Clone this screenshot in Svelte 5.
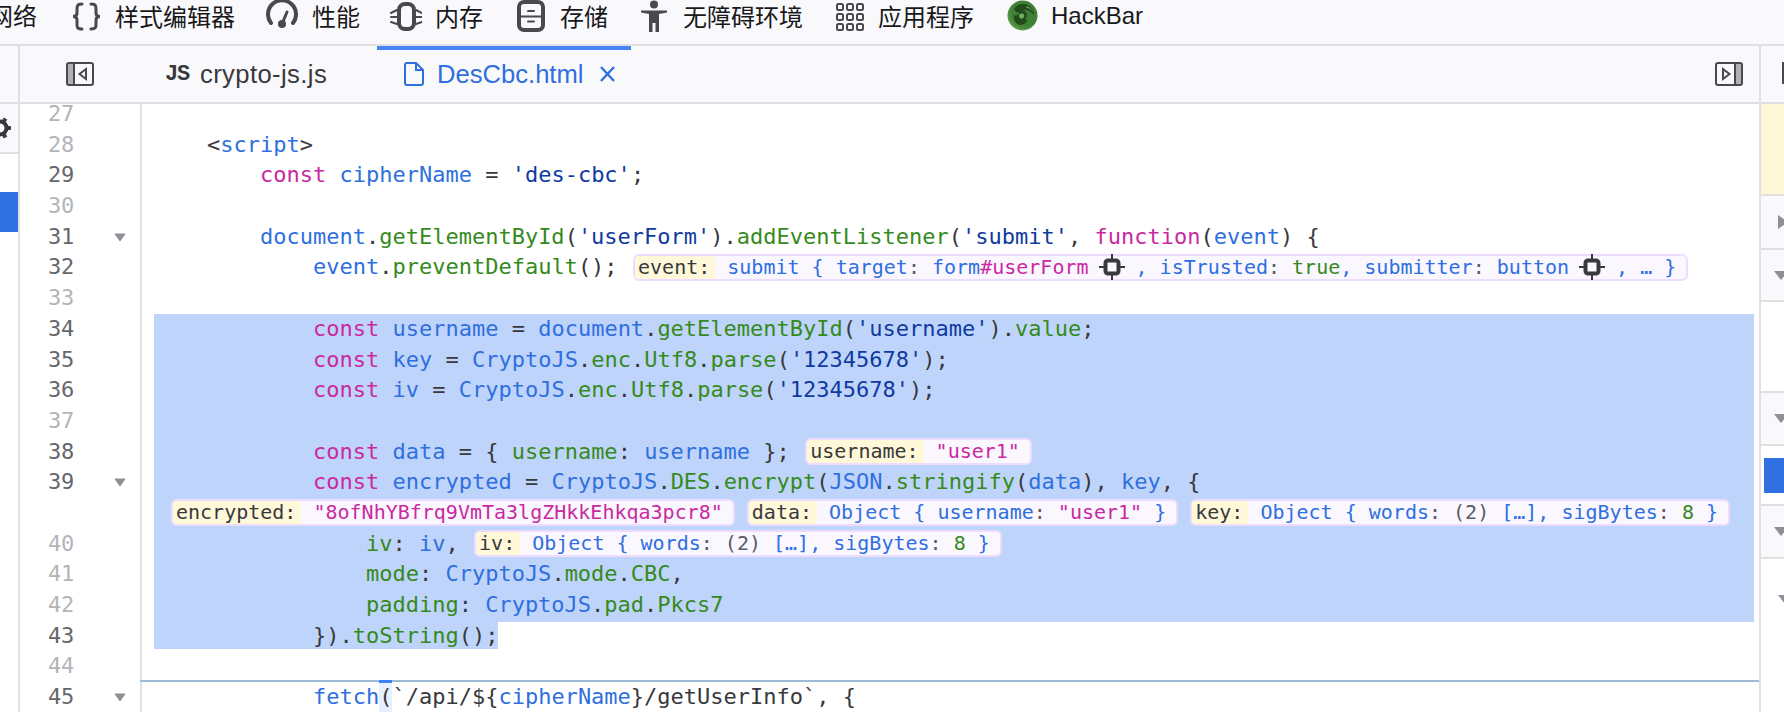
<script>
	const k = (t) => ['k', t];
	const b = (t) => ['b', t];
	const g = (t) => ['g', t];
	const s = (t) => ['s', t];
	const p = (t) => ['p', t];
	const m = (t) => ['m', t];
	const chip = ['chip', ''];

	const tabs = [
		{ id: 'style', w: 31, gap: 34, label: '样式编辑器' },
		{ id: 'perf', w: 33, gap: 31, label: '性能' },
		{ id: 'mem', w: 32, gap: 30, label: '内存' },
		{ id: 'store', w: 30, gap: 34, label: '存储' },
		{ id: 'a11y', w: 30, gap: 32, label: '无障碍环境' },
		{ id: 'apps', w: 29, gap: 33, label: '应用程序' },
		{ id: 'hack', w: 31, gap: 33, label: 'HackBar' }
	];

	const objWords = [b('Object { words'), m(': (2) '), b('[…], sigBytes'), m(': '), g('8'), b(' }')];

	const rows = [
		{ n: 27, dim: true, t: [] },
		{ n: 28, dim: true, t: [p('    <'), b('script'), p('>')] },
		{ n: 29, t: [p('        '), k('const'), p(' '), b('cipherName'), p(' = '), s("'des-cbc'"), p(';')] },
		{ n: 30, dim: true, t: [] },
		{
			n: 31,
			fold: true,
			t: [
				p('        '), b('document'), p('.'), g('getElementById'), p('('), s("'userForm'"), p(').'),
				g('addEventListener'), p('('), s("'submit'"), p(', '), k('function'), p('('), b('event'), p(') {')
			]
		},
		{
			n: 32,
			t: [p('            '), b('event'), p('.'), g('preventDefault'), p('();')],
			pv: [
				{
					label: 'event:',
					v: [
						b('submit { target'), m(': '), b('form'), k('#userForm'), chip, b(', isTrusted'), m(': '),
						g('true'), b(', submitter'), m(': '), b('button'), chip, b(', … }')
					]
				}
			]
		},
		{ n: 33, dim: true, t: [] },
		{
			n: 34,
			sel: true,
			t: [
				p('            '), k('const'), p(' '), b('username'), p(' = '), b('document'), p('.'),
				g('getElementById'), p('('), s("'username'"), p(').'), g('value'), p(';')
			]
		},
		{
			n: 35,
			sel: true,
			t: [
				p('            '), k('const'), p(' '), b('key'), p(' = '), b('CryptoJS'), p('.'), g('enc'), p('.'),
				g('Utf8'), p('.'), g('parse'), p('('), s("'12345678'"), p(');')
			]
		},
		{
			n: 36,
			sel: true,
			t: [
				p('            '), k('const'), p(' '), b('iv'), p(' = '), b('CryptoJS'), p('.'), g('enc'), p('.'),
				g('Utf8'), p('.'), g('parse'), p('('), s("'12345678'"), p(');')
			]
		},
		{ n: 37, dim: true, sel: true, t: [] },
		{
			n: 38,
			sel: true,
			t: [
				p('            '), k('const'), p(' '), b('data'), p(' = { '), g('username'), p(': '), b('username'), p(' };')
			],
			pv: [{ label: 'username:', v: [k('"user1"')] }]
		},
		{
			n: 39,
			fold: true,
			sel: true,
			t: [
				p('            '), k('const'), p(' '), b('encrypted'), p(' = '), b('CryptoJS'), p('.'), g('DES'), p('.'),
				g('encrypt'), p('('), b('JSON'), p('.'), g('stringify'), p('('), b('data'), p('), '), b('key'), p(', {')
			]
		},
		{
			sel: true,
			t: [],
			pv: [
				{ label: 'encrypted:', v: [k('"8ofNhYBfrq9VmTa3lgZHkkEhkqa3pcr8"')] },
				{ label: 'data:', v: [b('Object { username'), m(': '), k('"user1"'), b(' }')] },
				{ label: 'key:', v: objWords }
			]
		},
		{
			n: 40,
			dim: true,
			sel: true,
			t: [p('                '), g('iv'), p(': '), b('iv'), p(',')],
			pv: [{ label: 'iv:', v: objWords }]
		},
		{
			n: 41,
			dim: true,
			sel: true,
			t: [p('                '), g('mode'), p(': '), b('CryptoJS'), p('.'), g('mode'), p('.'), g('CBC'), p(',')]
		},
		{
			n: 42,
			dim: true,
			sel: true,
			t: [p('                '), g('padding'), p(': '), b('CryptoJS'), p('.'), g('pad'), p('.'), g('Pkcs7')]
		},
		{ n: 43, part: true, t: [p('            }).'), g('toString'), p('();')] },
		{ n: 44, dim: true, t: [] },
		{
			n: 45,
			fold: true,
			cur: true,
			t: [
				p('            '), b('fetch'), ['paren', '('], p('`/api/${'), b('cipherName'), p('}/getUserInfo`, {')
			]
		}
	];
</script>

<div class="devtools">
	<nav class="toolbar">
		<span class="tab-label cut">网络</span>
		{#each tabs as tab}
			<div class="tool" style="margin-left: {tab.gap}px">
				<svg width={tab.w} height="32" viewBox="0 0 {tab.w} 32" class="tool-icon">
					{#if tab.id === 'style'}
						<path d="M11 4C6 4 6 6 6 10V13C6 15 4.5 16.5 2 16.5C4.5 16.5 6 18 6 20V24C6 27 6 29 11 29" />
						<path d="M20 4C25 4 25 6 25 10V13C25 15 26.5 16.5 29 16.5C26.5 16.5 25 18 25 20V24C25 27 25 29 20 29" />
					{:else if tab.id === 'perf'}
						<path d="M5 23A14 14 0 1 1 27 23" stroke-width="4" />
						<path d="M16 24L21 12" />
						<circle cx="16" cy="24" r="4" class="solid" />
					{:else if tab.id === 'mem'}
						<rect x="9" y="4" width="15" height="25" rx="6" stroke-width="4" />
						<path d="M1 13L7 10M1 17H7M1 22L7 24M32 13L26 10M32 17H26M32 22L26 24" stroke-width="2" />
					{:else if tab.id === 'store'}
						<rect x="2" y="2" width="24" height="28" rx="5" stroke-width="4" />
						<path d="M4 16.5H24" stroke-width="2" />
						<path d="M11 11H17M11 21.5H17" stroke-width="2" />
					{:else if tab.id === 'a11y'}
						<circle cx="14" cy="4.5" r="4" class="solid" />
						<path d="M1 10.5H27L27 12.5L19 14V32H15.5V23H12.5V32H9V14L1 12.5Z" class="solid" />
					{:else if tab.id === 'apps'}
						{#each [3, 13, 23] as y}
							{#each [0, 10, 20] as x}
								<rect x={x + 1} y={y + 1} width="6" height="6" rx="1.5" stroke-width="2" />
							{/each}
						{/each}
					{:else}
						<defs>
							<radialGradient id="hb" cx="0.6" cy="0.4" r="0.65">
								<stop offset="0" stop-color="#3c7a33" />
								<stop offset="0.7" stop-color="#3f8236" />
								<stop offset="1" stop-color="#5f9f50" />
							</radialGradient>
						</defs>
						<circle cx="15.5" cy="15.5" r="15" fill="url(#hb)" stroke="none" />
						<path d="M7 9C10 4 16 3 21 5C25 7 27 11 27 15C24 11 20 9 16 10C20 12 21 16 18 19C22 20 19 25 13 25C9 24 6 20 7 15C9 17 11 14 13 13C10 13 8 11 7 9Z" fill="#234a1d" stroke="none" />
						<path d="M12 15C15 12 18 14 17 17C15 20 12 19 12 15Z" fill="#70b05c" stroke="none" />
						<path d="M20 6C23 7 26 10 26 12C24 9 22 8 19 8Z" fill="#5a9c4a" stroke="none" />
					{/if}
				</svg>
				<span class="tab-label" class:latin={tab.id === 'hack'}>{tab.label}</span>
			</div>
		{/each}
	</nav>

	<div class="body">
		<aside class="side-left">
			<div class="side-head"></div>
			<div class="gear-row">
				<svg width="18" height="48" viewBox="0 0 18 48">
					<g transform="translate(0 24)" fill="#38383d">
						<circle r="6.5" fill="none" stroke="#38383d" stroke-width="4" />
						<rect x="-2" y="-11" width="4" height="6" transform="rotate(30)" />
						<rect x="-2" y="-11" width="4" height="6" transform="rotate(90)" rx="1" />
						<rect x="-2" y="-11" width="4" height="6" transform="rotate(150)" />
					</g>
				</svg>
			</div>
			<div class="side-mark"></div>
		</aside>

		<section class="center">
			<div class="tabbar">
				<svg class="toggle" width="28" height="24" viewBox="0 0 28 24">
					<rect x="1" y="1" width="26" height="22" rx="2" class="panel" />
					<rect x="2" y="2" width="6" height="20" fill="#b1b1b3" />
					<path d="M8 1.5V22.5" class="panel" />
					<path d="M20 7V17L13.5 12Z" class="panel" />
				</svg>
				<div class="file-tab">
					<span class="js">JS</span>
					<span>crypto-js.js</span>
				</div>
				<div class="file-tab active">
					<svg width="20" height="24" viewBox="0 0 20 24">
						<path d="M3 1H12L19 8V21C19 22 18 23 17 23H3C2 23 1 22 1 21V3C1 2 2 1 3 1ZM12 1V8H19" fill="none" stroke="#2f6fde" stroke-width="2" />
					</svg>
					<span>DesCbc.html</span>
					<svg width="17" height="16" viewBox="0 0 17 16">
						<path d="M2 1L15 15M15 1L2 15" stroke="#2f6fde" stroke-width="2.4" />
					</svg>
				</div>
				<svg class="toggle right" width="28" height="24" viewBox="0 0 28 24">
					<rect x="1" y="1" width="26" height="22" rx="2" class="panel" />
					<rect x="20" y="2" width="6" height="20" fill="#b1b1b3" />
					<path d="M20 1.5V22.5" class="panel" />
					<path d="M8 7V17L14.5 12Z" class="panel" />
				</svg>
			</div>

			<div class="editor">
				<div class="scroll">
					{#each rows as row}
						<div class="row">
							<div class="gutter" class:dim={row.dim}>
								<span class="num">{row.n ?? ''}</span>
								{#if row.fold}
									<svg class="fold" width="12" height="9" viewBox="0 0 12 9">
										<path d="M1 1H11L6 8Z" fill="#8f8f96" stroke="#8f8f96" stroke-linejoin="round" />
									</svg>
								{/if}
							</div>
							<div class="code" class:current={row.cur}>
								<div class="text" class:sel={row.sel} class:part={row.part}>{#each row.t as tok}<span class={tok[0]}>{tok[1]}</span>{/each}{#if row.pv}{#each row.pv as box}<span class="preview"><span class="pv-label">{box.label}</span><span class="pv-value">{#each box.v as tok}{#if tok[0] === 'chip'}<svg class="pv-chip" width="26" height="26" viewBox="0 0 26 26"><rect x="6.5" y="6.5" width="13" height="13" rx="2.5" /><path d="M0 13H5M21 13H26M13 0V5M13 21V26" /></svg>{:else}<span class={tok[0]}>{tok[1]}</span>{/if}{/each}</span></span>{/each}{/if}</div>
							</div>
						</div>
					{/each}
				</div>
			</div>
		</section>

		<aside class="side-right">
			<div class="rs-head">
				<svg width="4" height="24" viewBox="0 0 4 24"><path d="M1 1V23" class="panel" /></svg>
			</div>
			<div class="rs yellow"></div>
			<div class="rs grey h52"><span class="tri-right"></span></div>
			<div class="rs grey h50"><span class="tri-down"></span></div>
			<div class="rs h89"></div>
			<div class="rs grey h51"><span class="tri-down"></span></div>
			<div class="rs h58"><span class="rs-mark"></span></div>
			<div class="rs grey h51"><span class="tri-down"></span></div>
			<div class="rs last"><span class="tri-down small"></span></div>
		</aside>
	</div>
</div>

<style>
	:global(body) {
		margin: 0;
		background: #fff;
	}

	.devtools {
		width: 1784px;
		height: 712px;
		overflow: hidden;
		display: flex;
		flex-direction: column;
		font-family: 'Liberation Sans', 'Noto Sans CJK SC', sans-serif;
		color: #18181b;
	}

	/* top toolbar */
	.toolbar {
		flex: none;
		height: 44px;
		border-bottom: 2px solid #e0e0e2;
		background: #f9f9fb;
		display: flex;
		align-items: flex-start;
		overflow: hidden;
	}

	.tool {
		display: flex;
		align-items: center;
		gap: 13px;
		height: 32px;
	}

	.tool-icon {
		display: block;
		flex: none;
		fill: none;
		stroke: #48484d;
		stroke-width: 3;
		stroke-linecap: round;
	}

	.tool-icon .solid {
		fill: #48484d;
		stroke: none;
	}

	.tab-label {
		font: 24px/30px 'Noto Sans CJK SC', sans-serif;
		white-space: nowrap;
	}

	.tab-label.latin {
		font-family: 'Liberation Sans', sans-serif;
		line-height: 32px;
	}

	.cut {
		margin-left: -11px;
		flex: none;
	}

	.body {
		flex: 1;
		min-height: 0;
		display: flex;
	}

	/* left strip */
	.side-left {
		flex: none;
		width: 18px;
		border-right: 2px solid #e0e0e2;
		display: flex;
		flex-direction: column;
	}

	.side-head {
		height: 56px;
		background: #f9f9fb;
		border-bottom: 2px solid #e0e0e2;
	}

	.gear-row {
		height: 48px;
		background: #f9f9fb;
		border-bottom: 2px solid #e0e0e2;
	}

	.gear-row svg {
		display: block;
	}

	.side-mark {
		height: 40px;
		margin-top: 38px;
		background: #3070e0;
	}

	/* editor column */
	.center {
		flex: 1;
		min-width: 0;
		display: flex;
		flex-direction: column;
	}

	.tabbar {
		flex: none;
		height: 56px;
		background: #f9f9fb;
		border-bottom: 2px solid #e0e0e2;
		display: flex;
		align-items: center;
	}

	.toggle {
		flex: none;
		margin-left: 46px;
	}

	.toggle.right {
		margin-left: auto;
		margin-right: 16px;
	}

	.panel {
		fill: none;
		stroke: #48484d;
		stroke-width: 2;
	}

	.file-tab {
		height: 100%;
		display: flex;
		align-items: center;
		box-sizing: border-box;
		font-size: 25.6px;
		color: #38383d;
	}

	.file-tab:not(.active) {
		margin-left: 71px;
		width: 212px;
		gap: 13px;
		letter-spacing: 0.4px;
	}

	.js {
		font: bold 22px 'Liberation Mono', monospace;
		width: 22px;
		letter-spacing: -1.2px;
	}

	.file-tab.active {
		width: 254px;
		padding-left: 27px;
		gap: 13px;
		color: #2f6fde;
		box-shadow: inset 0 4px 0 #4285f4;
	}

	.file-tab.active svg:last-child {
		margin-left: 2px;
	}

	.editor {
		flex: 1;
		min-height: 0;
		overflow: hidden;
		background: #fff;
	}

	.scroll {
		margin-top: -5px;
	}

	.row {
		display: flex;
		height: 30.7px;
	}

	.gutter {
		flex: none;
		width: 120px;
		box-sizing: border-box;
		display: flex;
		align-items: center;
		padding-left: 28px;
		font: 22px/30.7px 'DejaVu Sans Mono', monospace;
		color: #66666b;
		background: #fff;
	}

	.gutter.dim {
		color: #b4b4b8;
	}

	.num {
		width: 26px;
		flex: none;
		letter-spacing: -0.2px;
	}

	.fold {
		margin-left: 40px;
		flex: none;
	}

	.code {
		flex: 1;
		min-width: 0;
		border-left: 2px solid #e0e0e2;
		padding-left: 12px;
		padding-right: 5px;
		box-sizing: border-box;
	}

	.code.current {
		box-shadow: 0 -2px 0 #9dbad6;
	}

	.text {
		height: 100%;
		font: 22px/30.7px 'DejaVu Sans Mono', monospace;
		white-space: pre;
		color: #38383d;
	}

	.text.sel {
		background: #bfd4fb;
		box-shadow: 0 1px 0 #bfd4fb;
	}

	.text.part {
		background: #bfd4fb;
		width: fit-content;
		height: 28.5px;
	}

	.k {
		color: #c92a9f;
	}

	.b {
		color: #2f6fde;
	}

	.g {
		color: #368a1c;
	}

	.s {
		color: #0f3aa0;
	}

	.p {
		color: #38383d;
	}

	.m {
		color: #5b5b66;
	}

	.paren {
		display: inline-block;
		height: 30.7px;
		vertical-align: top;
		background: #e6f0fe;
		box-shadow: 0 -2px 0 #3b82f6, inset 0 1px 0 #3b82f6;
		color: #38383d;
	}

	/* inline variable previews */
	.preview {
		display: inline-flex;
		align-items: stretch;
		box-sizing: border-box;
		height: 27px;
		vertical-align: middle;
		margin-left: 12px;
		border: 2px solid #eedcff;
		border-radius: 6px;
		background: #faf7ff;
		font-size: 20px;
		line-height: 23px;
		position: relative;
		top: -1px;
	}

	.preview:first-of-type {
		margin-left: 17px;
	}

	.p + .preview {
		margin-left: 15.4px;
	}

	.pv-label {
		background: #fff9d9;
		color: #38383d;
		padding: 0 5px 0 3px;
		border-radius: 4px 0 0 4px;
	}

	.pv-value {
		display: inline-flex;
		align-items: center;
		padding: 0 10px 0 12px;
		white-space: pre;
	}

	.pv-chip {
		flex: none;
		margin: -2px 11px -2px 10px;
		fill: none;
		stroke: #38383d;
	}

	.pv-chip rect {
		stroke-width: 4;
	}

	.pv-chip path {
		stroke-width: 2;
	}

	/* right strip */
	.side-right {
		flex: none;
		width: 23px;
		border-left: 2px solid #e0e0e2;
		display: flex;
		flex-direction: column;
	}

	.rs-head {
		box-sizing: border-box;
		background: #f9f9fb;
		border-bottom: 2px solid #e0e0e2;
		height: 58px;
		padding: 15px 0 0 21px;
	}

	.rs {
		border-bottom: 2px solid #e0e0e2;
		overflow: hidden;
	}

	.grey {
		background: #f9f9fb;
		display: flex;
		align-items: center;
	}

	.yellow {
		height: 90px;
		background: #fff8d8;
	}

	.h52 {
		height: 52px;
	}

	.h50 {
		height: 50px;
	}

	.h51 {
		height: 51px;
	}

	.h89 {
		height: 89px;
	}

	.h58 {
		height: 58px;
		background: #fff;
	}

	.last {
		flex: 1;
		border-bottom: 0;
	}

	.rs-mark {
		display: block;
		margin: 12px 0 0 3px;
		height: 35px;
		background: #3070e0;
	}

	.tri-right {
		display: block;
		margin-left: 17px;
		border-left: 10px solid #8f8f96;
		border-top: 7px solid transparent;
		border-bottom: 7px solid transparent;
	}

	.tri-down {
		display: block;
		margin-left: 13px;
		border-top: 9px solid #8f8f96;
		border-left: 7px solid transparent;
		border-right: 7px solid transparent;
		width: 0;
	}

	.tri-down.small {
		margin: 36px 0 0 17px;
	}
</style>
